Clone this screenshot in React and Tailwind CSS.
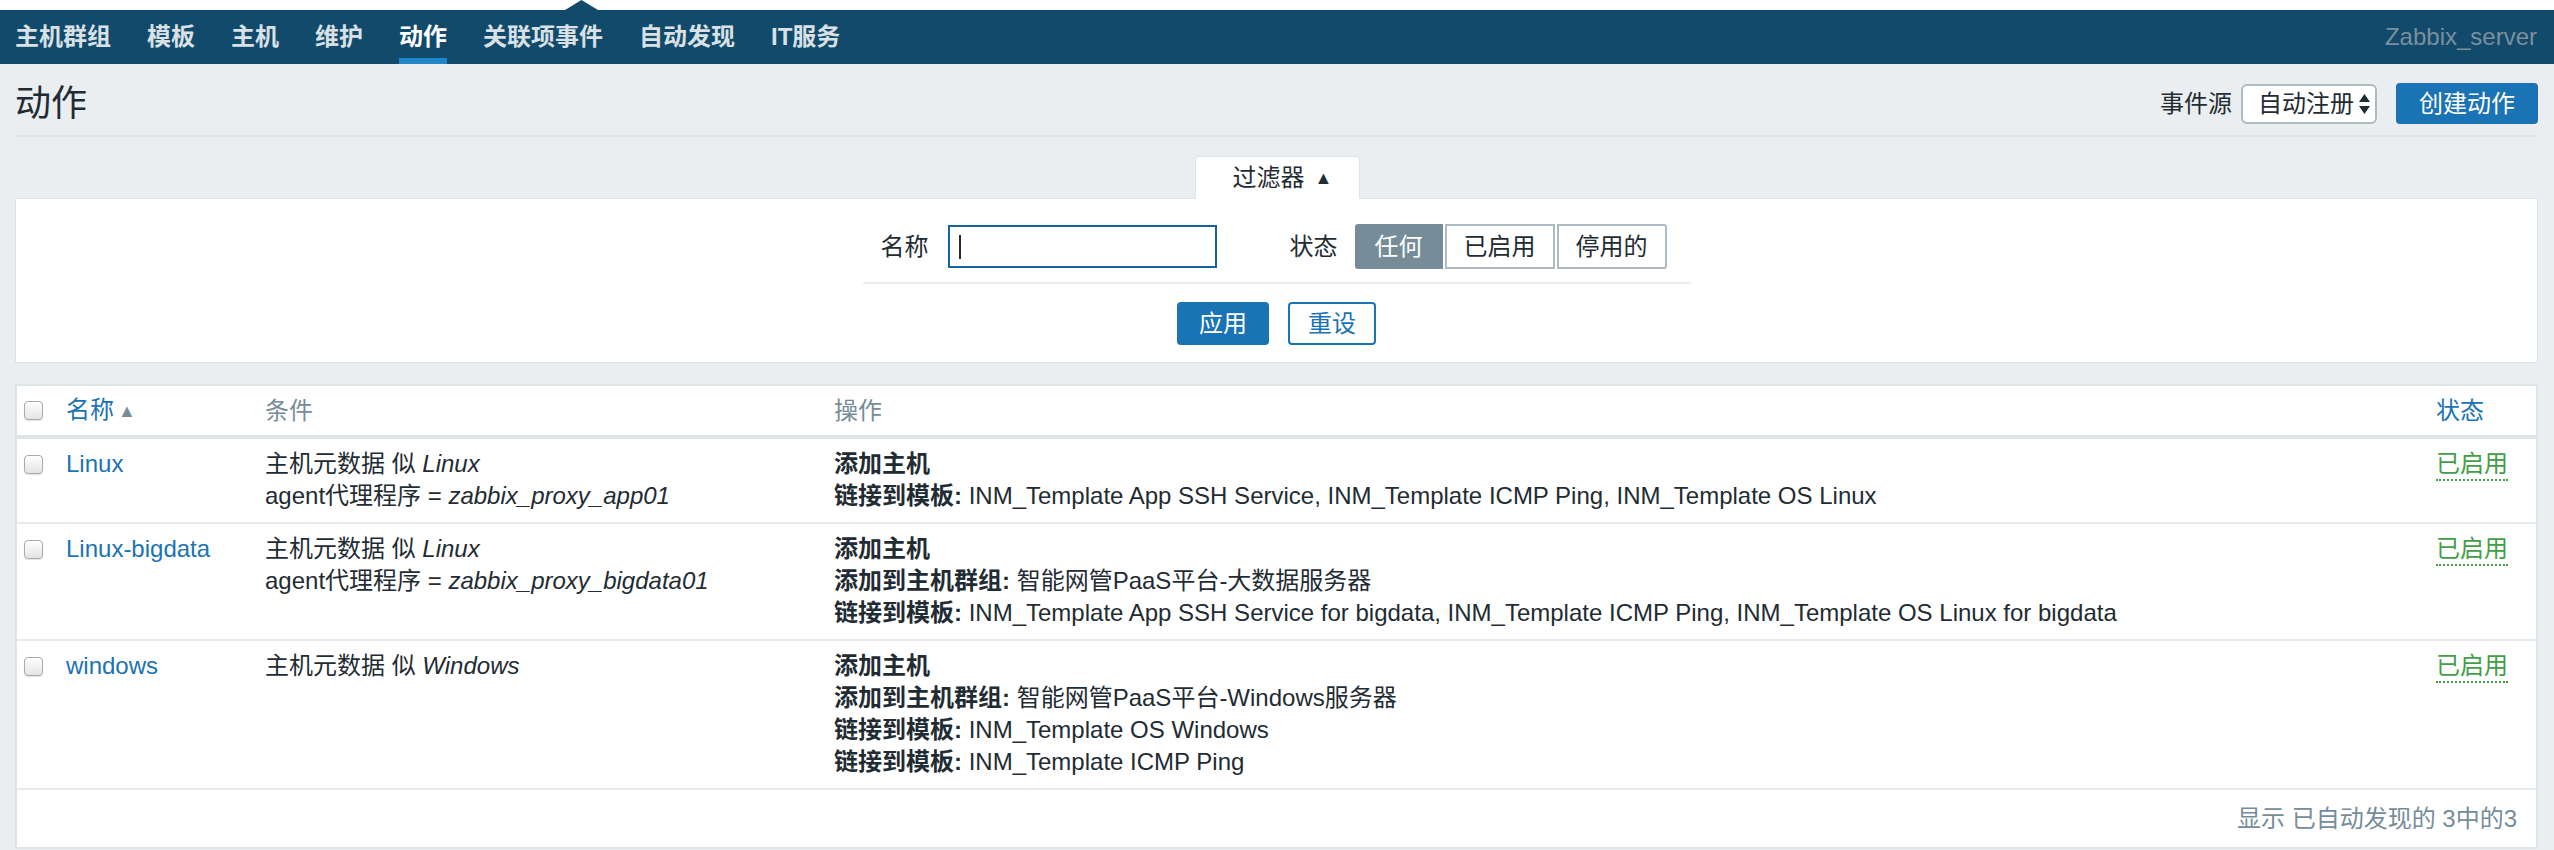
import React from 'react';

const navItems = ['主机群组', '模板', '主机', '维护', '动作', '关联项事件', '自动发现', 'IT服务'];

const actions = [
  {
    name: 'Linux',
    conditions: [
      ['主机元数据 似 ', 'Linux'],
      ['agent代理程序 = ', 'zabbix_proxy_app01'],
    ],
    operations: [
      ['添加主机', ''],
      ['链接到模板:', ' INM_Template App SSH Service, INM_Template ICMP Ping, INM_Template OS Linux'],
    ],
  },
  {
    name: 'Linux-bigdata',
    conditions: [
      ['主机元数据 似 ', 'Linux'],
      ['agent代理程序 = ', 'zabbix_proxy_bigdata01'],
    ],
    operations: [
      ['添加主机', ''],
      ['添加到主机群组:', ' 智能网管PaaS平台-大数据服务器'],
      ['链接到模板:', ' INM_Template App SSH Service for bigdata, INM_Template ICMP Ping, INM_Template OS Linux for bigdata'],
    ],
  },
  {
    name: 'windows',
    conditions: [['主机元数据 似 ', 'Windows']],
    operations: [
      ['添加主机', ''],
      ['添加到主机群组:', ' 智能网管PaaS平台-Windows服务器'],
      ['链接到模板:', ' INM_Template OS Windows'],
      ['链接到模板:', ' INM_Template ICMP Ping'],
    ],
  },
];

const Checkbox = () => (
  <div className="flex h-[32px] items-center">
    <div className="h-[19px] w-[19px] rounded-[4px] border border-[#aaaaaa] bg-gradient-to-b from-white to-[#e4e4e4] shadow-[0_1px_1px_rgba(0,0,0,0.12)]" />
  </div>
);

const App = () => {
  return (
    <div className="min-h-screen bg-[#ebeef0] font-['Liberation_Sans','Noto_Sans_CJK_SC',sans-serif] text-[24px] leading-[32px] text-[#1f2c33]">
      {/* upper strip with pointer */}
      <div className="h-[10px] bg-white">
        <svg className="ml-[565px] block" width="33" height="10" viewBox="0 0 33 10">
          <polygon points="0,10 16.5,0 33,10" fill="#114a6b" />
        </svg>
      </div>

      {/* main nav */}
      <div className="flex h-[54px] items-stretch bg-[#114a6b] pl-[15px] pr-[17px]">
        <div className="flex gap-[36px]">
          {navItems.map((item) => (
            <div
              key={item}
              className={`flex items-center border-b-[6px] pt-[6px] font-bold ${
                item === '动作' ? 'border-[#1f86c8] text-white' : 'border-transparent text-[#d9e1e6]'
              }`}
            >
              {item}
            </div>
          ))}
        </div>
        <div className="ml-auto flex items-center text-[#7b909c]">Zabbix_server</div>
      </div>

      {/* page header */}
      <div className="ml-[14px] mr-[16px] flex items-center justify-between border-b-2 border-[#dfe4e7] pb-[11px] pt-[19px]">
        <h1 className="pl-px text-[36px] leading-[40px] text-[#1f2c33]">动作</h1>
        <div className="flex items-center">
          <span className="mr-[9px]">事件源</span>
          <div className="flex h-[40px] w-[136px] items-center rounded-[6px] border-2 border-[#acbbc2] bg-white pl-[15px]">
            <span>自动注册</span>
            <svg className="ml-[4px]" width="13" height="22" viewBox="0 0 13 22">
              <polygon points="6.5,1 12,9 1,9" fill="#1f2c33" />
              <polygon points="1,13 12,13 6.5,21" fill="#1f2c33" />
            </svg>
          </div>
          <button className="ml-[19px] h-[41px] rounded-[4px] bg-[#1a73b4] px-[23px] text-white">创建动作</button>
        </div>
      </div>

      {/* filter */}
      <div className="mt-[19px] flex justify-center">
        <div className="-mb-px flex h-[43px] w-[165px] items-center rounded-t-[4px] border border-b-0 border-[#dfe4e7] bg-white pl-[37px]">
          <span>过滤器</span>
          <span className="ml-[10px] text-[18px] leading-none">▲</span>
        </div>
      </div>
      <div className="ml-[15px] mr-[16px] h-[165px] border border-[#dfe4e7] bg-white pt-[25px]">
        <div className="mx-auto w-[828px]">
          <div className="flex items-center pb-[13px]">
            <span className="ml-[18px]">名称</span>
            <div className="ml-[19px] flex h-[43px] w-[269px] items-center border-2 border-[#17649c] bg-white">
              <div className="ml-[9px] h-[24px] w-[2px] bg-[#1f2c33]" />
            </div>
            <span className="ml-[73px]">状态</span>
            <div className="ml-[17px] flex gap-[2px]">
              <div className="flex h-[45px] w-[88px] items-center justify-center rounded-l-[3px] bg-[#768d99] text-white">任何</div>
              <div className="flex h-[45px] w-[110px] items-center justify-center border-2 border-[#acbbc2]">已启用</div>
              <div className="flex h-[45px] w-[110px] items-center justify-center rounded-r-[3px] border-2 border-[#acbbc2]">停用的</div>
            </div>
          </div>
          <div className="h-[2px] bg-[#ebeef0]" />
          <div className="flex justify-center gap-[19px] pt-[18px]">
            <button className="h-[43px] w-[92px] rounded-[4px] bg-[#1a73b4] text-white">应用</button>
            <button className="h-[43px] w-[88px] rounded-[4px] border-2 border-[#1a73b4] bg-white text-[#1a73b4]">重设</button>
          </div>
        </div>
      </div>

      {/* actions table */}
      <div className="ml-[15px] mr-[16px] mt-[21px] border-2 border-[#dfe4e7] bg-white">
        <table className="w-full table-fixed">
          <colgroup>
            <col className="w-[39px]" />
            <col className="w-[199px]" />
            <col className="w-[569px]" />
            <col className="w-[1602px]" />
            <col />
          </colgroup>
          <thead>
            <tr className="border-b-4 border-[#dfe4e7]">
              <th className="py-[8px] pl-[7px] text-left font-normal">
                <Checkbox />
              </th>
              <th className="px-[10px] py-[8px] text-left font-normal text-[#1a73b4]">
                名称<span className="ml-[4px] align-[1px] text-[18px] text-[#768d99]">▲</span>
              </th>
              <th className="px-[10px] py-[8px] text-left font-normal text-[#768d99]">条件</th>
              <th className="px-[10px] py-[8px] text-left font-normal text-[#768d99]">操作</th>
              <th className="px-[10px] py-[8px] text-left font-normal text-[#1a73b4]">状态</th>
            </tr>
          </thead>
          <tbody>
            {actions.map((action) => (
              <tr key={action.name} className="border-b-2 border-[#e6eaed] align-top">
                <td className="pb-[10px] pl-[7px] pt-[9px]">
                  <Checkbox />
                </td>
                <td className="px-[10px] pb-[10px] pt-[9px] text-[#1a73b4]">{action.name}</td>
                <td className="px-[10px] pb-[10px] pt-[9px]">
                  {action.conditions.map(([label, value], i) => (
                    <div key={i}>
                      {label}
                      <i>{value}</i>
                    </div>
                  ))}
                </td>
                <td className="px-[10px] pb-[10px] pt-[9px]">
                  {action.operations.map(([label, value], i) => (
                    <div key={i}>
                      <b>{label}</b>
                      {value}
                    </div>
                  ))}
                </td>
                <td className="px-[10px] pb-[10px] pt-[9px]">
                  <span className="inline-block border-b-2 border-dotted border-[#429e47] leading-[30px] text-[#429e47]">已启用</span>
                </td>
              </tr>
            ))}
          </tbody>
        </table>
        <div className="flex h-[57px] items-center justify-end pr-[19px] text-[#768d99]">显示 已自动发现的 3中的3</div>
      </div>
    </div>
  );
};

export default App;
